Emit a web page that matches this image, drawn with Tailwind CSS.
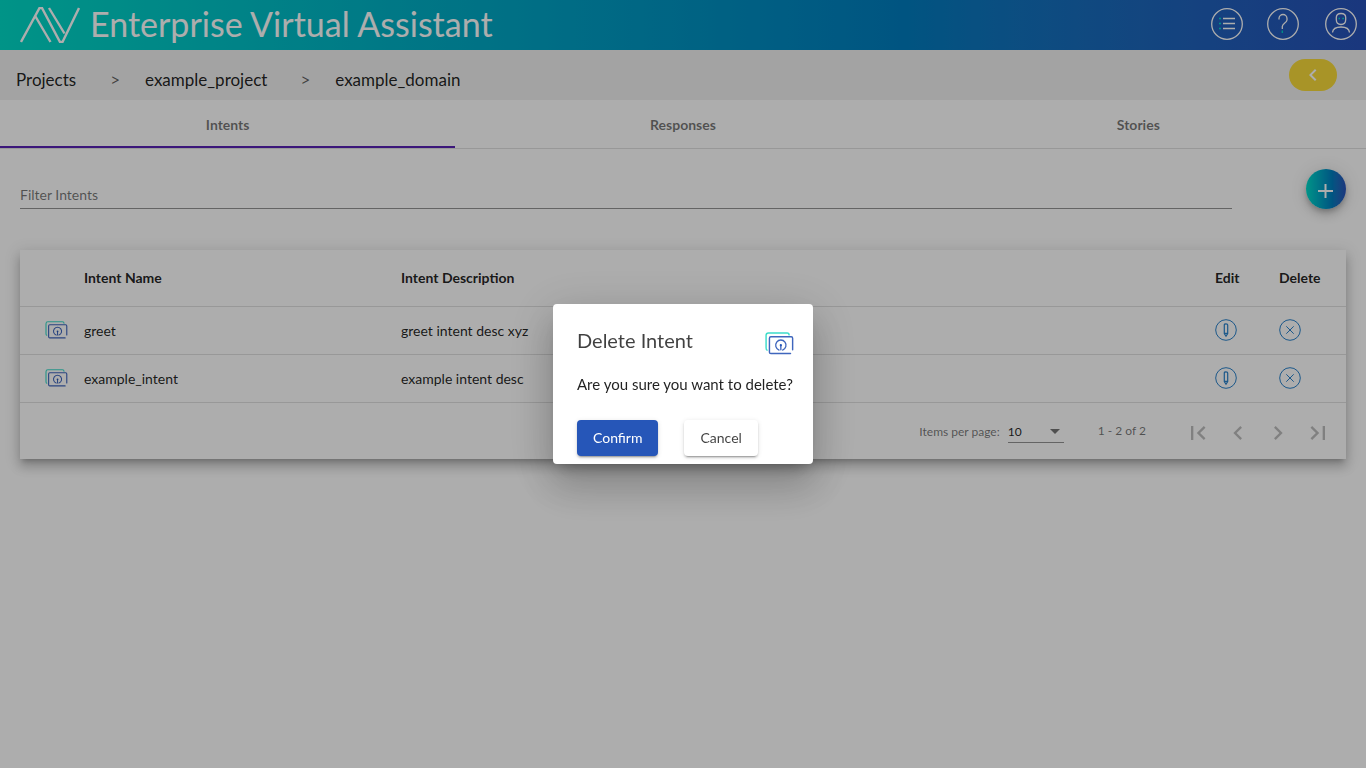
<!DOCTYPE html>
<html lang="en">
<head>
<meta charset="utf-8">
<meta name="viewport" content="width=device-width, initial-scale=1">
<title>Enterprise Virtual Assistant</title>
<script src="https://cdn.jsdelivr.net/npm/@tailwindcss/browser@4"></script>
</head>
<body class="min-h-screen bg-white font-[Lato,sans-serif] text-black/87">
<svg class="hidden" aria-hidden="true">
  <symbol id="intent" viewBox="0 0 30 24">
    <g fill="none" stroke-width="1.500" stroke-linecap="round">
      <path stroke="#3cdcca" d="M2 19Q1 18.500 1 16.500V3.500Q1 1 3.500 1H23Q25 1 25 3"/>
      <path stroke="#3f66bd" d="M28.700 18.500V6.500Q28.700 5 27.200 5H6Q4.500 5 4.500 6.500V21Q4.500 22.500 6 22.500H26.500"/>
      <path stroke="#3f66bd" stroke-width="1.400" d="M14.500 18.800A5.400 5.400 0 1 1 18.300 18.800M16.400 14V18.500"/>
    </g>
    <circle cx="16.400" cy="13.800" r="1.200" fill="#2656b8"/>
  </symbol>
  <symbol id="edit" viewBox="0 0 22 22">
    <g fill="none" stroke="#2b83cc">
      <circle cx="11" cy="11" r="10.300"/>
      <path stroke-width="1.200" d="M9.300 14.500V6Q9.300 4.800 11 4.800T12.700 6V14.500L11 17.200ZM9.300 14.300H12.700"/>
    </g>
  </symbol>
  <symbol id="remove" viewBox="0 0 22 22">
    <g fill="none" stroke="#2b83cc">
      <circle cx="11" cy="11" r="10.300"/>
      <path d="M7.300 7.300L14.700 14.700M14.700 7.300L7.300 14.700"/>
    </g>
  </symbol>
</svg>

<header class="flex h-[50px] items-center bg-linear-to-r from-[#00dac8] via-[#007dbf] via-66% to-[#2751b9] pr-[9px] pb-0.5 pl-5 text-white">
  <svg class="mt-0.5 h-9 w-15" viewBox="0 0 60 36" fill="none" stroke="currentColor" stroke-width="2.400" aria-hidden="true">
    <path d="M1 35L19.500 1H22L40 35H42.500L59 1M15.500 9.500L30.500 35M29 1L44.500 26.500"/>
  </svg>
  <h1 class="ml-2.5 text-[34px] leading-[48px] font-normal">Enterprise Virtual Assistant</h1>
  <nav class="ml-auto flex items-center" aria-label="Tools">
    <button class="size-8" aria-label="Activity list">
      <svg class="size-8" viewBox="0 0 32 32" fill="none" stroke="currentColor" stroke-width="1.300">
        <circle cx="16" cy="16" r="15.300"/>
        <path d="M12 10.500H24M12 15.500H24M12 20.500H24"/>
        <path stroke="#00dac8" d="M8 10.500H10M8 15.500H10M8 20.500H10"/>
      </svg>
    </button>
    <button class="ml-6 size-8" aria-label="Help">
      <svg class="size-8" viewBox="0 0 32 32" fill="none" stroke="currentColor" stroke-width="1.300">
        <circle cx="16" cy="16" r="15.300"/>
        <path d="M12 11.500V10.500A4 4 0 0 1 20 10.500V12Q20 13.500 17.500 15.200Q15.300 17 15.300 18.500V21"/>
        <path stroke="#00dac8" d="M15.300 22.500V25"/>
      </svg>
    </button>
    <button class="ml-[26px] size-8" aria-label="Account">
      <svg class="size-8" viewBox="0 0 32 32" fill="none" stroke="currentColor" stroke-width="1.300">
        <circle cx="16" cy="16" r="15.300"/>
        <path d="M11.300 9.500Q11.300 5.500 16 5.500T20.700 9.500V11.500Q20.700 16.500 16 16.500T11.300 11.500ZM7.500 24.500Q8 19 16 19T24.500 24.500"/>
        <path stroke="#00dac8" d="M13.500 10.500H15M17.300 10.500H19"/>
      </svg>
    </button>
  </nav>
</header>

<div class="flex h-[50px] items-center bg-[#f1f1f1] pr-[29px] pl-4">
  <nav class="flex items-center pt-2.5 text-[17px]" aria-label="Breadcrumb">
    <a href="#">Projects</a>
    <span class="mr-[25px] ml-[34px] text-black/60">&gt;</span>
    <a href="#">example_project</a>
    <span class="mr-[25px] ml-[33px] text-black/60">&gt;</span>
    <a href="#">example_domain</a>
  </nav>
  <button class="ml-auto flex h-8 w-12 items-center justify-center rounded-full bg-[#f8db3a] text-white" aria-label="Back">
    <svg class="size-6" viewBox="0 0 24 24" fill="currentColor"><path d="M15.410 7.410L14 6l-6 6 6 6 1.410-1.410L10.830 12z"/></svg>
  </button>
</div>

<div role="tablist" class="grid h-[49px] grid-cols-3 border-b border-black/12 text-sm font-bold text-black/54">
  <button role="tab" aria-selected="true" class="border-b-2 border-[#5721b4] pt-1">Intents</button>
  <button role="tab" aria-selected="false" class="border-b-2 border-transparent pt-1">Responses</button>
  <button role="tab" aria-selected="false" class="border-b-2 border-transparent pt-1">Stories</button>
</div>

<main class="px-5 pt-5">
  <div class="flex items-start justify-between">
    <input type="text" aria-label="Filter Intents" placeholder="Filter Intents" class="mr-[74px] h-10 min-w-0 flex-1 border-b border-black/42 pt-3 text-sm placeholder:text-black/54">
    <button class="flex size-10 shrink-0 items-center justify-center rounded-full bg-linear-to-r from-[#00dac8] via-[#007dbf] via-66% to-[#2751b9] text-white shadow-[0_3px_5px_-1px_rgba(0,0,0,.2),0_6px_10px_0_rgba(0,0,0,.14),0_1px_18px_0_rgba(0,0,0,.12)]" aria-label="Add intent">
      <svg class="mt-1 size-6" viewBox="0 0 24 24" fill="none" stroke="currentColor" stroke-width="2"><path d="M4 12H19M11.500 5V19"/></svg>
    </button>
  </div>

  <section class="mt-[41px] bg-white shadow-[0_5px_5px_-3px_rgba(0,0,0,.2),0_8px_10px_1px_rgba(0,0,0,.14),0_3px_14px_2px_rgba(0,0,0,.12)]">
    <table class="w-full table-fixed border-separate border-spacing-0 text-left text-sm">
      <colgroup><col class="w-16"><col class="w-[317px]"><col><col class="w-16"><col class="w-[67px]"></colgroup>
      <thead>
        <tr class="h-[57px] [&>th]:border-b [&>th]:border-black/12 [&>th]:font-bold">
          <th aria-label="Type"></th><th>Intent Name</th><th>Intent Description</th><th>Edit</th><th>Delete</th>
        </tr>
      </thead>
      <tbody class="[&_td]:h-12 [&_td]:border-b [&_td]:border-black/12">
        <tr>
          <td class="pb-0.5 pl-[25px]"><svg class="h-[18px] w-[23px]"><use href="#intent"/></svg></td>
          <td>greet</td><td>greet intent desc xyz</td>
          <td class="pb-0.5"><button class="block size-[22px]" aria-label="Edit greet"><svg class="size-[22px]"><use href="#edit"/></svg></button></td>
          <td class="pb-0.5"><button class="block size-[22px]" aria-label="Delete greet"><svg class="size-[22px]"><use href="#remove"/></svg></button></td>
        </tr>
        <tr>
          <td class="pb-0.5 pl-[25px]"><svg class="h-[18px] w-[23px]"><use href="#intent"/></svg></td>
          <td>example_intent</td><td>example intent desc</td>
          <td class="pb-0.5"><button class="block size-[22px]" aria-label="Edit example_intent"><svg class="size-[22px]"><use href="#edit"/></svg></button></td>
          <td class="pb-0.5"><button class="block size-[22px]" aria-label="Delete example_intent"><svg class="size-[22px]"><use href="#remove"/></svg></button></td>
        </tr>
      </tbody>
    </table>
    <div class="flex h-14 items-center justify-end pr-2 text-xs text-black/54">
      <label for="page-size" class="pt-0.5">Items per page:</label>
      <div class="relative ml-2 w-14">
        <select id="page-size" class="block h-6 w-full appearance-none border-b border-black/42 pt-0.5 text-xs text-black/87"><option>10</option><option>25</option></select>
        <svg class="pointer-events-none absolute top-2.5 right-1 h-[5px] w-2.5" viewBox="0 0 10 5" fill="#000" fill-opacity=".54"><path d="M0 0H10L5 5Z"/></svg>
      </div>
      <span class="mr-8 ml-[34px]">1 - 2 of 2</span>
      <div class="flex pt-1 text-black/26">
        <button disabled class="flex size-10 items-center justify-center" aria-label="First page"><svg class="size-7" viewBox="0 0 24 24" fill="currentColor"><path d="M18.410 16.590L13.820 12l4.590-4.590L17 6l-6 6 6 6zM6 6h2v12H6z"/></svg></button>
        <button disabled class="flex size-10 items-center justify-center" aria-label="Previous page"><svg class="size-7" viewBox="0 0 24 24" fill="currentColor"><path d="M15.410 7.410L14 6l-6 6 6 6 1.410-1.410L10.830 12z"/></svg></button>
        <button disabled class="flex size-10 items-center justify-center" aria-label="Next page"><svg class="size-7" viewBox="0 0 24 24" fill="currentColor"><path d="M10 6L8.590 7.410 13.170 12l-4.580 4.590L10 18l6-6z"/></svg></button>
        <button disabled class="flex size-10 items-center justify-center" aria-label="Last page"><svg class="size-7" viewBox="0 0 24 24" fill="currentColor"><path d="M5.590 7.410L10.180 12l-4.590 4.590L7 18l6-6-6-6zM16 6h2v12h-2z"/></svg></button>
      </div>
    </div>
  </section>
</main>

<div class="fixed inset-0 flex items-center justify-center bg-black/32">
  <div role="dialog" aria-modal="true" aria-labelledby="dialog-title" class="w-[260px] rounded bg-white px-6 pt-6 pb-2 shadow-[0_11px_15px_-7px_rgba(0,0,0,.2),0_24px_38px_3px_rgba(0,0,0,.14),0_9px_46px_8px_rgba(0,0,0,.12)]">
    <div class="-mr-[5px] flex h-7 items-start justify-between">
      <h2 id="dialog-title" class="text-xl leading-6 text-black/75">Delete Intent</h2>
      <svg class="mt-1 h-[23px] w-[29px]"><use href="#intent"/></svg>
    </div>
    <p class="mt-4 text-[15px] leading-6 whitespace-nowrap">Are you sure you want to delete?</p>
    <div class="mt-6 flex gap-[26px] text-sm">
      <button class="h-9 rounded bg-[#2656b8] px-4 text-white shadow-[0_3px_1px_-2px_rgba(0,0,0,.2),0_2px_2px_0_rgba(0,0,0,.14),0_1px_5px_0_rgba(0,0,0,.12)]">Confirm</button>
      <button class="h-9 rounded bg-white px-4 text-black/75 shadow-[0_3px_1px_-2px_rgba(0,0,0,.2),0_2px_2px_0_rgba(0,0,0,.14),0_1px_5px_0_rgba(0,0,0,.12)]">Cancel</button>
    </div>
  </div>
</div>
</body>
</html>
